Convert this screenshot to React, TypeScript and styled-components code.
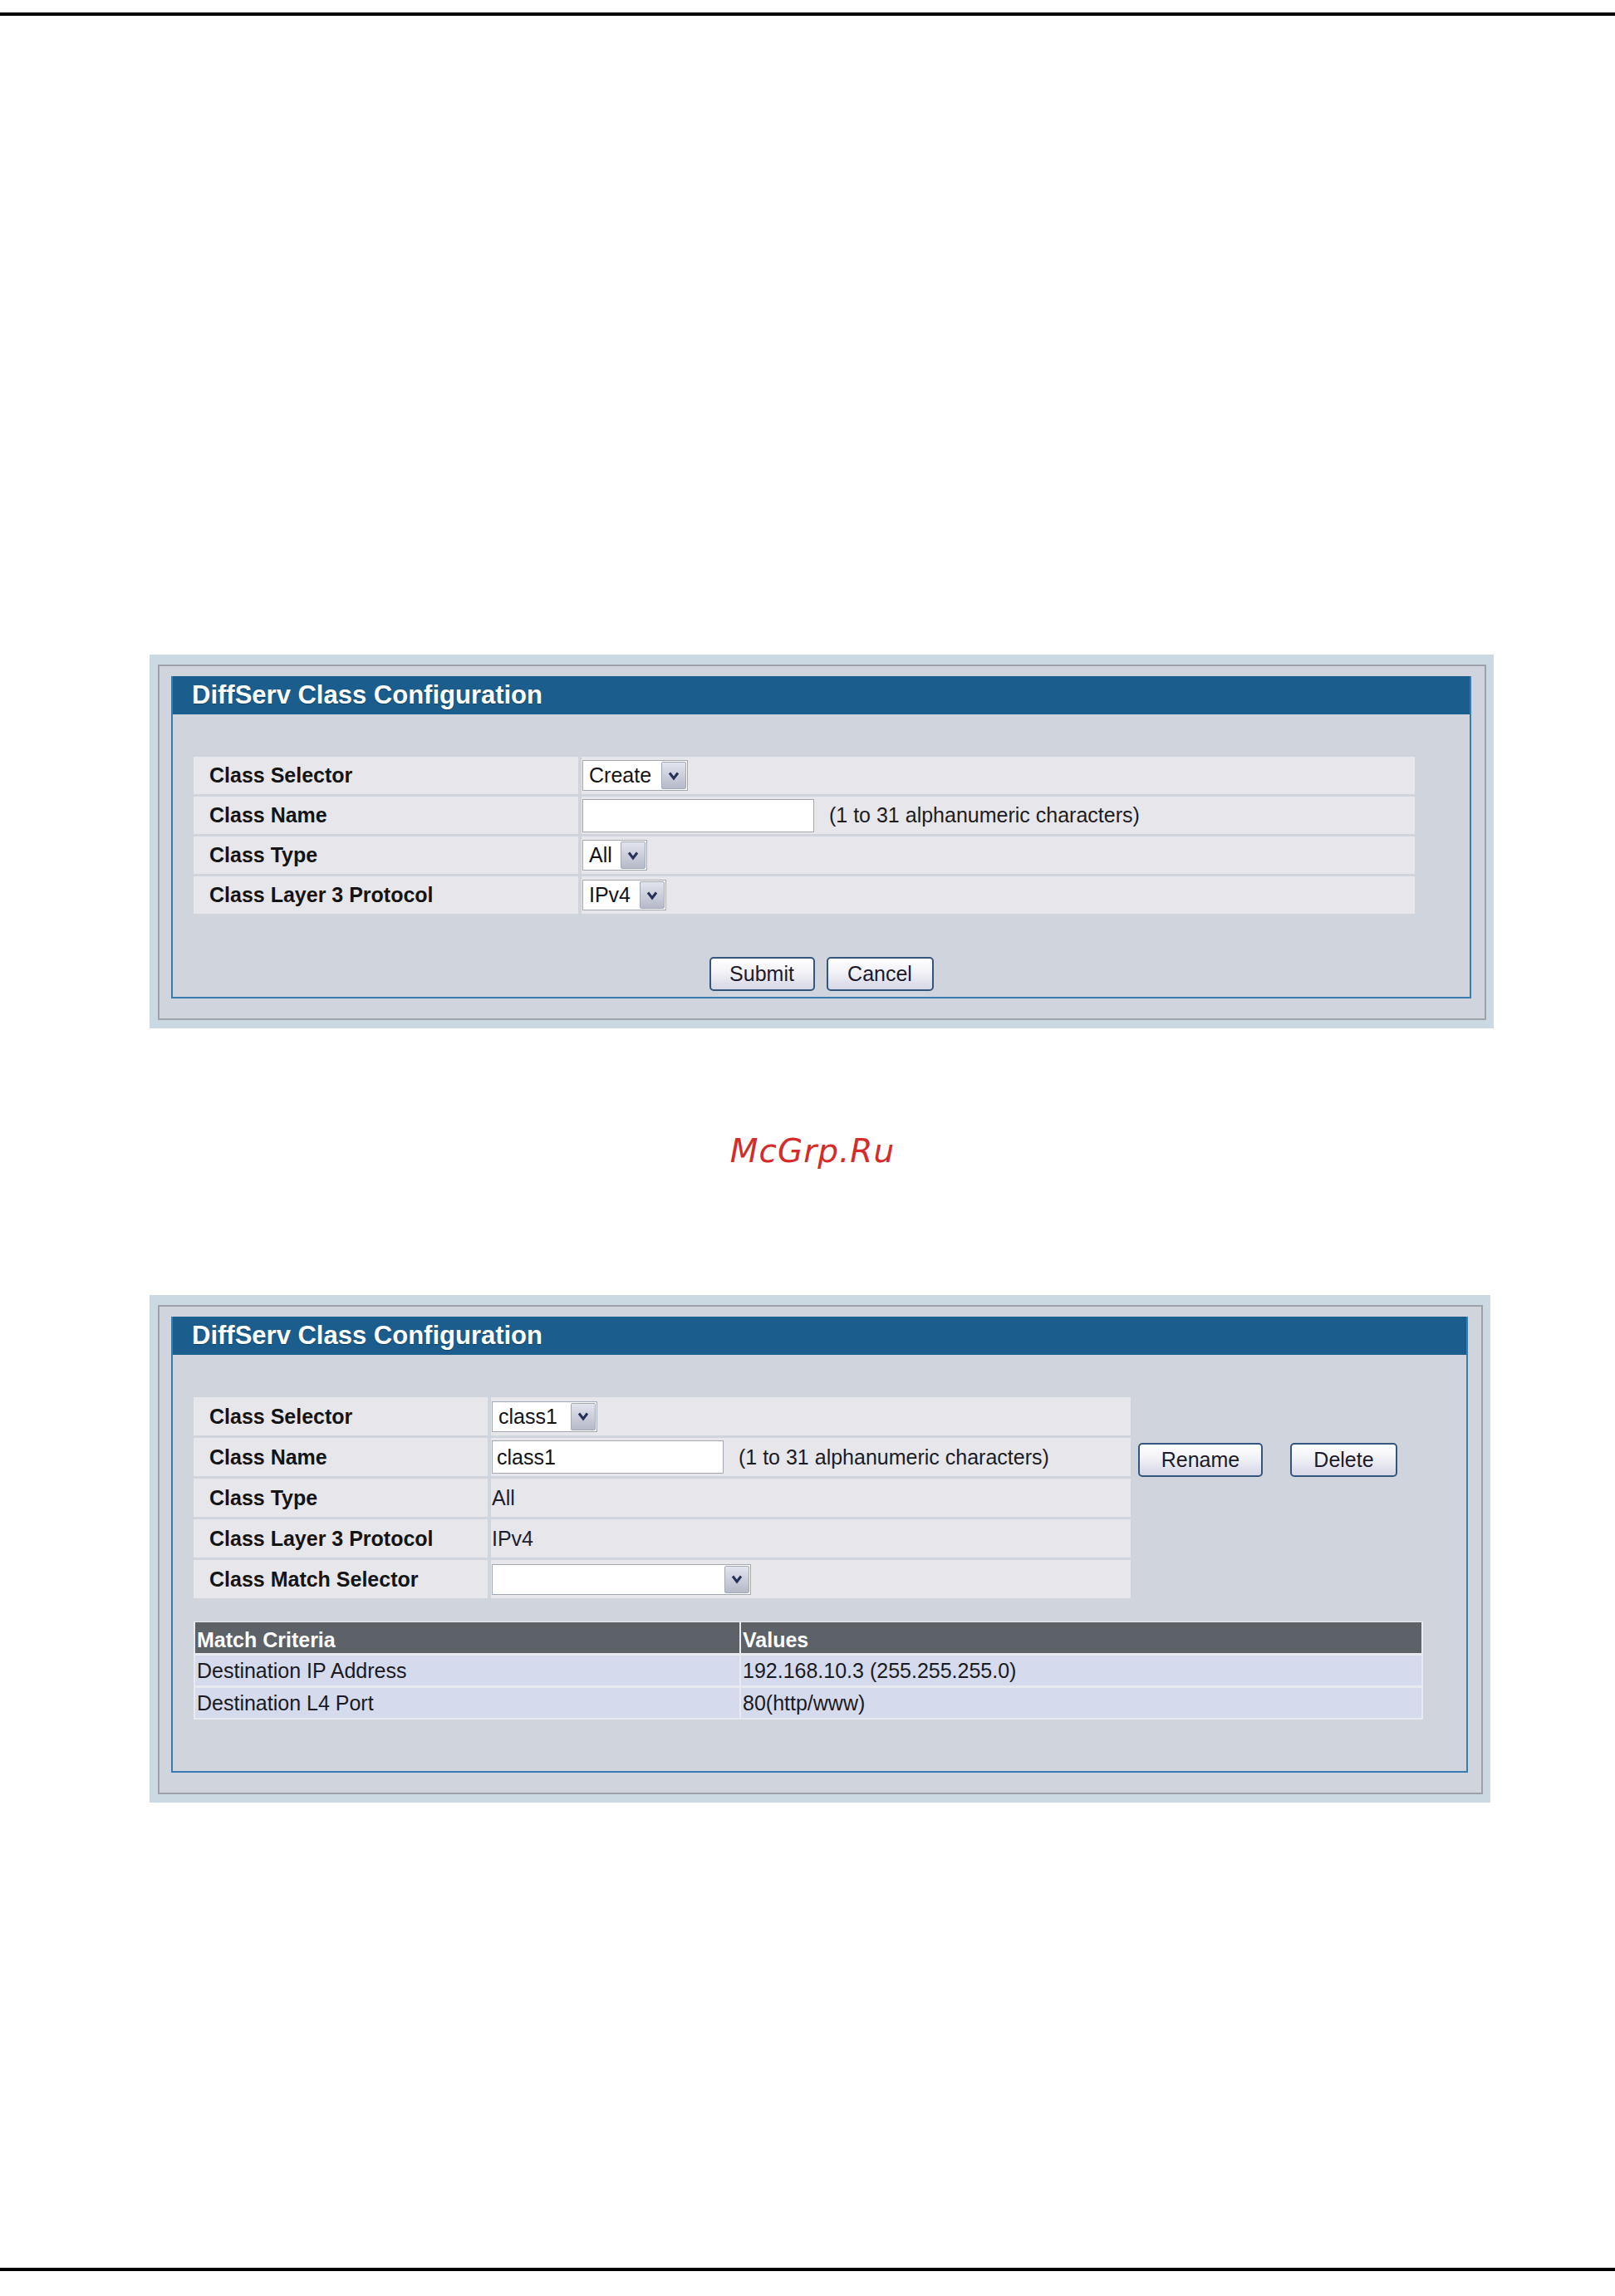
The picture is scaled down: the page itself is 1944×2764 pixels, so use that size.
import React from 'react';
import styled, { createGlobalStyle } from 'styled-components';

const GlobalStyle = createGlobalStyle`
  body {
    margin: 0;
    background: #ffffff;
    font-family: 'Liberation Sans', Arial, sans-serif;
  }
`;

const SPage = styled.div`
  width: 1944px;
  min-height: 2764px;
  padding-top: 15px;
  box-sizing: border-box;
  display: flex;
  flex-direction: column;
  align-items: flex-start;
`;

const SRule = styled.div<{ $top?: number }>`
  width: 100%;
  height: 4px;
  margin-top: ${(p) => p.$top || 0}px;
  background: #000;
`;

const SFrame = styled.section<{ $width: number; $top: number }>`
  width: ${(p) => p.$width}px;
  margin: ${(p) => p.$top}px 0 0 180px;
  padding: 12px 9px 10px 10px;
  box-sizing: border-box;
  background: #cbd9e3;
`;

const SInner = styled.div`
  border: 2px solid #9ea2a8;
  background: #d0d5dd;
  padding: 12px 16px 24px 14px;
`;

const SContent = styled.div`
  border: 2px solid #3b7cb0;
  border-top: none;
`;

const SHeader = styled.h2`
  margin: 0;
  height: 46px;
  padding-left: 23px;
  display: flex;
  align-items: center;
  background: #1b5e8e;
  color: #fff;
  font-size: 31px;
  font-weight: bold;
  text-shadow: 0 1px 1px rgba(0, 0, 0, 0.35);
`;

const SBody = styled.div<{ $bottom: number }>`
  padding: 51px 0 ${(p) => p.$bottom}px 25px;
`;

const SFormArea = styled.div`
  display: flex;
  align-items: flex-start;
`;

const SFormGrid = styled.div<{ $label: number; $width: number }>`
  width: ${(p) => p.$width}px;
  display: grid;
  grid-template-columns: ${(p) => p.$label}px 1fr;
  gap: 3px 4px;
`;

const SLabel = styled.div<{ $h: number }>`
  height: ${(p) => p.$h}px;
  display: flex;
  align-items: center;
  padding-left: 19px;
  background: #e7e7eb;
  color: #141414;
  font-size: 25px;
  font-weight: bold;
`;

const SValue = styled.div<{ $h: number }>`
  height: ${(p) => p.$h}px;
  display: flex;
  align-items: center;
  padding-left: 1px;
  background: #e7e7eb;
  color: #1a1f33;
  font-size: 25px;
`;

const SSelect = styled.div<{ $width: number }>`
  width: ${(p) => p.$width}px;
  height: 37px;
  box-sizing: border-box;
  display: flex;
  align-items: stretch;
  border: 1px solid #a3a9b3;
  background: #fff;
  color: #141414;
  font-size: 25px;
`;

const SSelectText = styled.span`
  flex: 1;
  display: flex;
  align-items: center;
  padding-left: 7px;
`;

const SArrow = styled.span`
  width: 28px;
  display: flex;
  align-items: center;
  justify-content: center;
  margin: 1px;
  border: 1px solid #a2a8b7;
  border-radius: 2px;
  background: linear-gradient(#e2e4ed, #b6b9c9);
`;

const SInput = styled.div`
  width: 279px;
  height: 40px;
  box-sizing: border-box;
  display: flex;
  align-items: center;
  padding-left: 5px;
  border: 1px solid #a3a9b3;
  background: #fff;
  color: #141414;
  font-size: 25px;
`;

const SHint = styled.span`
  margin-left: 18px;
  color: #1c1c24;
  font-size: 25px;
`;

const SButtonRow = styled.div`
  margin-top: 52px;
  margin-left: -25px;
  display: flex;
  justify-content: center;
  gap: 14px;
`;

const SButton = styled.button<{ $width: number }>`
  width: ${(p) => p.$width}px;
  height: 41px;
  padding: 0;
  border: 2px solid #34567e;
  border-radius: 5px;
  background: linear-gradient(#ffffff 0%, #f1f1f7 45%, #d6d6e6 100%);
  color: #1d1a2c;
  font-family: 'Liberation Sans', Arial, sans-serif;
  font-size: 25px;
`;

const SActions = styled.div`
  margin-left: 9px;
  padding-top: 55px;
  display: flex;
  gap: 33px;
`;

const SMatchTable = styled.div`
  width: 1480px;
  margin-top: 28px;
  box-sizing: border-box;
  display: grid;
  grid-template-columns: 655px 1fr;
  gap: 3px 2px;
  padding: 1px 2px 2px;
  background: #e8eaef;
`;

const SMatchHead = styled.div`
  height: 36px;
  display: flex;
  align-items: flex-end;
  padding: 0 0 1px 2px;
  background: #5d6168;
  color: #fff;
  font-size: 25px;
  font-weight: bold;
`;

const SMatchCell = styled.div`
  height: 36px;
  display: flex;
  align-items: center;
  padding-left: 2px;
  background: #d5dbec;
  color: #1a1a22;
  font-size: 25px;
`;

const SWatermark = styled.div`
  width: 100%;
  margin-top: 128px;
  padding-left: 12px;
  box-sizing: border-box;
  text-align: center;
  font-family: 'DejaVu Sans', sans-serif;
  font-style: italic;
  font-size: 39px;
  line-height: 40px;
  letter-spacing: 1px;
  color: #d42b2b;
`;

const Chevron = () => (
  <svg width="14" height="12" viewBox="0 0 14 12">
    <polyline points="2,2.5 7,9 12,2.5" fill="none" stroke="#253158" strokeWidth="3" />
  </svg>
);

const Select = ({ width, text }: { width: number; text: string }) => (
  <SSelect $width={width}>
    <SSelectText>{text}</SSelectText>
    <SArrow>
      <Chevron />
    </SArrow>
  </SSelect>
);

const Panel = ({
  width,
  top,
  bottom,
  children,
}: {
  width: number;
  top: number;
  bottom: number;
  children: React.ReactNode;
}) => (
  <SFrame $width={width} $top={top}>
    <SInner>
      <SContent>
        <SHeader>DiffServ Class Configuration</SHeader>
        <SBody $bottom={bottom}>{children}</SBody>
      </SContent>
    </SInner>
  </SFrame>
);

const App = () => {
  return (
    <SPage>
      <GlobalStyle />
      <SRule />

      <Panel width={1618} top={769} bottom={7}>
        <SFormGrid $label={463} $width={1470}>
          <SLabel $h={45}>Class Selector</SLabel>
          <SValue $h={45}>
            <Select width={127} text="Create" />
          </SValue>
          <SLabel $h={45}>Class Name</SLabel>
          <SValue $h={45}>
            <SInput />
            <SHint>(1 to 31 alphanumeric characters)</SHint>
          </SValue>
          <SLabel $h={45}>Class Type</SLabel>
          <SValue $h={45}>
            <Select width={78} text="All" />
          </SValue>
          <SLabel $h={45}>Class Layer 3 Protocol</SLabel>
          <SValue $h={45}>
            <Select width={101} text="IPv4" />
          </SValue>
        </SFormGrid>
        <SButtonRow>
          <SButton $width={127}>Submit</SButton>
          <SButton $width={129}>Cancel</SButton>
        </SButtonRow>
      </Panel>

      <SWatermark>McGrp.Ru</SWatermark>

      <Panel width={1614} top={153} bottom={62}>
        <SFormArea>
          <SFormGrid $label={354} $width={1128}>
            <SLabel $h={46}>Class Selector</SLabel>
            <SValue $h={46}>
              <Select width={127} text="class1" />
            </SValue>
            <SLabel $h={46}>Class Name</SLabel>
            <SValue $h={46}>
              <SInput>class1</SInput>
              <SHint>(1 to 31 alphanumeric characters)</SHint>
            </SValue>
            <SLabel $h={46}>Class Type</SLabel>
            <SValue $h={46}>All</SValue>
            <SLabel $h={46}>Class Layer 3 Protocol</SLabel>
            <SValue $h={46}>IPv4</SValue>
            <SLabel $h={46}>Class Match Selector</SLabel>
            <SValue $h={46}>
              <Select width={312} text="" />
            </SValue>
          </SFormGrid>
          <SActions>
            <SButton $width={150}>Rename</SButton>
            <SButton $width={129}>Delete</SButton>
          </SActions>
        </SFormArea>
        <SMatchTable>
          <SMatchHead>Match Criteria</SMatchHead>
          <SMatchHead>Values</SMatchHead>
          <SMatchCell>Destination IP Address</SMatchCell>
          <SMatchCell>192.168.10.3 (255.255.255.0)</SMatchCell>
          <SMatchCell>Destination L4 Port</SMatchCell>
          <SMatchCell>80(http/www)</SMatchCell>
        </SMatchTable>
      </Panel>

      <SRule $top={560} />
    </SPage>
  );
};

export default App;
